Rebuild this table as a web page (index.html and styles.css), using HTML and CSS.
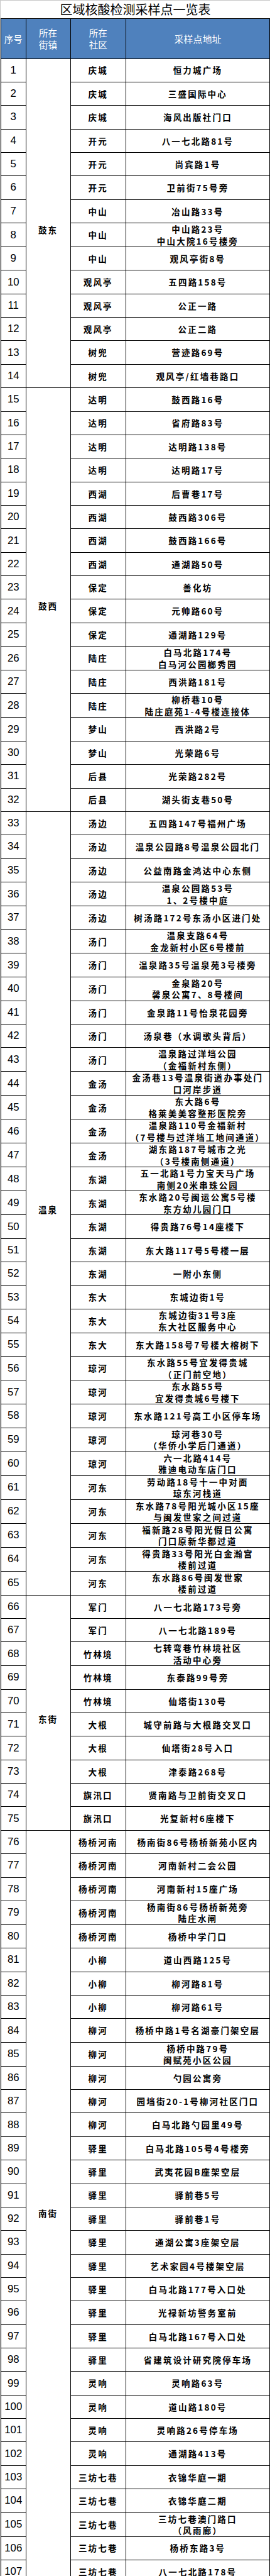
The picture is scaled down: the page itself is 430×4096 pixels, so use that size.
FILE: index.html
```html
<!DOCTYPE html>
<html lang="zh-CN">
<head>
<meta charset="utf-8">
<title>区域核酸检测采样点一览表</title>
<link rel="stylesheet" href="styles.css">
</head>
<body>
<div class="sheet">
  <div class="title">区域核酸检测采样点一览表</div>
  <table class="grid">
    <colgroup>
      <col class="c-seq"><col class="c-town"><col class="c-comm"><col class="c-addr">
    </colgroup>
    <thead>
      <tr>
        <th>序号</th>
        <th>所在<br>街镇</th>
        <th>所在<br>社区</th>
        <th class="h-addr">采样点地址</th>
      </tr>
    </thead>
    <tbody>
      <tr><td class="seq">1</td><td class="town" rowspan="14">鼓东</td><td class="txt">庆城</td><td class="txt">恒力城广场</td></tr>
      <tr><td class="seq">2</td><td class="txt">庆城</td><td class="txt">三盛国际中心</td></tr>
      <tr><td class="seq">3</td><td class="txt">庆城</td><td class="txt">海风出版社门口</td></tr>
      <tr><td class="seq">4</td><td class="txt">开元</td><td class="txt">八一七北路81号</td></tr>
      <tr><td class="seq">5</td><td class="txt">开元</td><td class="txt">尚宾路1号</td></tr>
      <tr><td class="seq">6</td><td class="txt">开元</td><td class="txt">卫前街75号旁</td></tr>
      <tr><td class="seq">7</td><td class="txt">中山</td><td class="txt">冶山路33号</td></tr>
      <tr><td class="seq">8</td><td class="txt">中山</td><td class="txt">中山路23号<br>中山大院16号楼旁</td></tr>
      <tr><td class="seq">9</td><td class="txt">中山</td><td class="txt">观风亭街8号</td></tr>
      <tr><td class="seq">10</td><td class="txt">观风亭</td><td class="txt">五四路158号</td></tr>
      <tr><td class="seq">11</td><td class="txt">观风亭</td><td class="txt">公正一路</td></tr>
      <tr><td class="seq">12</td><td class="txt">观风亭</td><td class="txt">公正二路</td></tr>
      <tr><td class="seq">13</td><td class="txt">树兜</td><td class="txt">营迹路69号</td></tr>
      <tr><td class="seq">14</td><td class="txt">树兜</td><td class="txt">观风亭/红墙巷路口</td></tr>

      <tr><td class="seq">15</td><td class="town" rowspan="18">鼓西</td><td class="txt">达明</td><td class="txt">鼓西路16号</td></tr>
      <tr><td class="seq">16</td><td class="txt">达明</td><td class="txt">省府路83号</td></tr>
      <tr><td class="seq">17</td><td class="txt">达明</td><td class="txt">达明路138号</td></tr>
      <tr><td class="seq">18</td><td class="txt">达明</td><td class="txt">达明路17号</td></tr>
      <tr><td class="seq">19</td><td class="txt">西湖</td><td class="txt">后曹巷17号</td></tr>
      <tr><td class="seq">20</td><td class="txt">西湖</td><td class="txt">鼓西路306号</td></tr>
      <tr><td class="seq">21</td><td class="txt">西湖</td><td class="txt">鼓西路166号</td></tr>
      <tr><td class="seq">22</td><td class="txt">西湖</td><td class="txt">通湖路50号</td></tr>
      <tr><td class="seq">23</td><td class="txt">保定</td><td class="txt">善化坊</td></tr>
      <tr><td class="seq">24</td><td class="txt">保定</td><td class="txt">元帅路60号</td></tr>
      <tr><td class="seq">25</td><td class="txt">保定</td><td class="txt">通湖路129号</td></tr>
      <tr><td class="seq">26</td><td class="txt">陆庄</td><td class="txt">白马北路174号<br>白马河公园榔秀园</td></tr>
      <tr><td class="seq">27</td><td class="txt">陆庄</td><td class="txt">西洪路181号</td></tr>
      <tr><td class="seq">28</td><td class="txt">陆庄</td><td class="txt">柳桥巷10号<br>陆庄庭苑1-4号楼连接体</td></tr>
      <tr><td class="seq">29</td><td class="txt">梦山</td><td class="txt">西洪路2号</td></tr>
      <tr><td class="seq">30</td><td class="txt">梦山</td><td class="txt">光荣路6号</td></tr>
      <tr><td class="seq">31</td><td class="txt">后县</td><td class="txt">光荣路282号</td></tr>
      <tr><td class="seq">32</td><td class="txt">后县</td><td class="txt">湖头街支巷50号</td></tr>

      <tr><td class="seq">33</td><td class="town" rowspan="33">温泉</td><td class="txt">汤边</td><td class="txt">五四路147号福州广场</td></tr>
      <tr><td class="seq">34</td><td class="txt">汤边</td><td class="txt">温泉公园路8号温泉公园北门</td></tr>
      <tr><td class="seq">35</td><td class="txt">汤边</td><td class="txt">公益南路金鸿达中心东侧</td></tr>
      <tr><td class="seq">36</td><td class="txt">汤边</td><td class="txt">温泉公园路53号<br>1、2号楼中庭</td></tr>
      <tr><td class="seq">37</td><td class="txt">汤边</td><td class="txt">树汤路172号东汤小区进门处</td></tr>
      <tr><td class="seq">38</td><td class="txt">汤门</td><td class="txt">温泉支路64号<br>金龙新村小区6号楼前</td></tr>
      <tr><td class="seq">39</td><td class="txt">汤门</td><td class="txt">温泉路35号温泉苑3号楼旁</td></tr>
      <tr><td class="seq">40</td><td class="txt">汤门</td><td class="txt">金泉路20号<br>馨泉公寓7、8号楼间</td></tr>
      <tr><td class="seq">41</td><td class="txt">汤门</td><td class="txt">金泉路11号怡泉花园旁</td></tr>
      <tr><td class="seq">42</td><td class="txt">汤门</td><td class="txt">汤泉巷（水调歌头背后）</td></tr>
      <tr><td class="seq">43</td><td class="txt">汤门</td><td class="txt">温泉路过洋垱公园<br>（金福新村东侧）</td></tr>
      <tr><td class="seq">44</td><td class="txt">金汤</td><td class="txt">金汤巷13号温泉街道办事处门<br>口河岸步道</td></tr>
      <tr><td class="seq">45</td><td class="txt">金汤</td><td class="txt">东大路6号<br>格莱美美容整形医院旁</td></tr>
      <tr><td class="seq">46</td><td class="txt">金汤</td><td class="txt">温泉路110号金福新村<br>（7号楼与过洋垱工地间通道）</td></tr>
      <tr><td class="seq">47</td><td class="txt">金汤</td><td class="txt">湖东路187号城市之光<br>（3号楼南侧通道）</td></tr>
      <tr><td class="seq">48</td><td class="txt">东湖</td><td class="txt">五一北路1号力宝天马广场<br>南侧20米串珠公园</td></tr>
      <tr><td class="seq">49</td><td class="txt">东湖</td><td class="txt">东水路20号闽运公寓5号楼<br>东方幼儿园门口</td></tr>
      <tr><td class="seq">50</td><td class="txt">东湖</td><td class="txt">得贵路76号14座楼下</td></tr>
      <tr><td class="seq">51</td><td class="txt">东湖</td><td class="txt">东大路117号5号楼一层</td></tr>
      <tr><td class="seq">52</td><td class="txt">东湖</td><td class="txt">一附小东侧</td></tr>
      <tr><td class="seq">53</td><td class="txt">东大</td><td class="txt">东城边街1号</td></tr>
      <tr><td class="seq">54</td><td class="txt">东大</td><td class="txt">东城边街31号3座<br>东大社区服务中心</td></tr>
      <tr><td class="seq">55</td><td class="txt">东大</td><td class="txt">东大路158号7号楼大榕树下</td></tr>
      <tr><td class="seq">56</td><td class="txt">琼河</td><td class="txt">东水路55号宜发得贵城<br>（正门前空地）</td></tr>
      <tr><td class="seq">57</td><td class="txt">琼河</td><td class="txt">东水路55号<br>宜发得贵城6号楼下</td></tr>
      <tr><td class="seq">58</td><td class="txt">琼河</td><td class="txt">东水路121号高工小区停车场</td></tr>
      <tr><td class="seq">59</td><td class="txt">琼河</td><td class="txt">琼河巷30号<br>（华侨小学后门通道）</td></tr>
      <tr><td class="seq">60</td><td class="txt">琼河</td><td class="txt">六一北路414号<br>雅迪电动车店门口</td></tr>
      <tr><td class="seq">61</td><td class="txt">河东</td><td class="txt">劳动路18号十一中对面<br>琼东河栈道</td></tr>
      <tr><td class="seq">62</td><td class="txt">河东</td><td class="txt">东水路78号阳光城小区15座<br>与闽发世家之间过道</td></tr>
      <tr><td class="seq">63</td><td class="txt">河东</td><td class="txt">福新路28号阳光假日公寓<br>门口原新华都过道</td></tr>
      <tr><td class="seq">64</td><td class="txt">河东</td><td class="txt">得贵路33号阳光白金瀚宫<br>楼前过道</td></tr>
      <tr><td class="seq">65</td><td class="txt">河东</td><td class="txt">东水路86号闽发世家<br>楼前过道</td></tr>

      <tr><td class="seq">66</td><td class="town" rowspan="10">东街</td><td class="txt">军门</td><td class="txt">八一七北路173号旁</td></tr>
      <tr><td class="seq">67</td><td class="txt">军门</td><td class="txt">八一七北路189号</td></tr>
      <tr><td class="seq">68</td><td class="txt">竹林境</td><td class="txt">七转弯巷竹林境社区<br>活动中心旁</td></tr>
      <tr><td class="seq">69</td><td class="txt">竹林境</td><td class="txt">东泰路99号旁</td></tr>
      <tr><td class="seq">70</td><td class="txt">竹林境</td><td class="txt">仙塔街130号</td></tr>
      <tr><td class="seq">71</td><td class="txt">大根</td><td class="txt">城守前路与大根路交叉口</td></tr>
      <tr><td class="seq">72</td><td class="txt">大根</td><td class="txt">仙塔街28号入口</td></tr>
      <tr><td class="seq">73</td><td class="txt">大根</td><td class="txt">津泰路268号</td></tr>
      <tr><td class="seq">74</td><td class="txt">旗汛口</td><td class="txt">贤南路与卫前街交叉口</td></tr>
      <tr><td class="seq">75</td><td class="txt">旗汛口</td><td class="txt">光复新村6座楼下</td></tr>

      <tr><td class="seq">76</td><td class="town" rowspan="32">南街</td><td class="txt">杨桥河南</td><td class="txt">杨南街86号杨桥新苑小区内</td></tr>
      <tr><td class="seq">77</td><td class="txt">杨桥河南</td><td class="txt">河南新村二会公园</td></tr>
      <tr><td class="seq">78</td><td class="txt">杨桥河南</td><td class="txt">河南新村15座广场</td></tr>
      <tr><td class="seq">79</td><td class="txt">杨桥河南</td><td class="txt">杨南街86号杨桥新苑旁<br>陆庄水闸</td></tr>
      <tr><td class="seq">80</td><td class="txt">杨桥河南</td><td class="txt">杨桥中学门口</td></tr>
      <tr><td class="seq">81</td><td class="txt">小柳</td><td class="txt">道山西路125号</td></tr>
      <tr><td class="seq">82</td><td class="txt">小柳</td><td class="txt">柳河路81号</td></tr>
      <tr><td class="seq">83</td><td class="txt">小柳</td><td class="txt">柳河路61号</td></tr>
      <tr><td class="seq">84</td><td class="txt">柳河</td><td class="txt">杨桥中路1号名湖豪门架空层</td></tr>
      <tr><td class="seq">85</td><td class="txt">柳河</td><td class="txt">杨桥中路79号<br>闽赋苑小区公园</td></tr>
      <tr><td class="seq">86</td><td class="txt">柳河</td><td class="txt">勺园公寓旁</td></tr>
      <tr><td class="seq">87</td><td class="txt">柳河</td><td class="txt">园垱街20-1号柳河社区门口</td></tr>
      <tr><td class="seq">88</td><td class="txt">柳河</td><td class="txt">白马北路勺园里49号</td></tr>
      <tr><td class="seq">89</td><td class="txt">驿里</td><td class="txt">白马北路105号4号楼旁</td></tr>
      <tr><td class="seq">90</td><td class="txt">驿里</td><td class="txt">武夷花园B座架空层</td></tr>
      <tr><td class="seq">91</td><td class="txt">驿里</td><td class="txt">驿前巷5号</td></tr>
      <tr><td class="seq">92</td><td class="txt">驿里</td><td class="txt">驿前巷1号</td></tr>
      <tr><td class="seq">93</td><td class="txt">驿里</td><td class="txt">通湖公寓3座架空层</td></tr>
      <tr><td class="seq">94</td><td class="txt">驿里</td><td class="txt">艺术家园4号楼架空层</td></tr>
      <tr><td class="seq">95</td><td class="txt">驿里</td><td class="txt">白马北路177号入口处</td></tr>
      <tr><td class="seq">96</td><td class="txt">驿里</td><td class="txt">光禄新坊警务室前</td></tr>
      <tr><td class="seq">97</td><td class="txt">驿里</td><td class="txt">白马北路167号入口处</td></tr>
      <tr><td class="seq">98</td><td class="txt">驿里</td><td class="txt">省建筑设计研究院停车场</td></tr>
      <tr><td class="seq">99</td><td class="txt">灵响</td><td class="txt">灵响路63号</td></tr>
      <tr><td class="seq">100</td><td class="txt">灵响</td><td class="txt">道山路180号</td></tr>
      <tr><td class="seq">101</td><td class="txt">灵响</td><td class="txt">灵响路26号停车场</td></tr>
      <tr><td class="seq">102</td><td class="txt">灵响</td><td class="txt">通湖路413号</td></tr>
      <tr><td class="seq">103</td><td class="txt">三坊七巷</td><td class="txt">衣锦华庭一期</td></tr>
      <tr><td class="seq">104</td><td class="txt">三坊七巷</td><td class="txt">衣锦华庭二期</td></tr>
      <tr><td class="seq">105</td><td class="txt">三坊七巷</td><td class="txt">三坊七巷澳门路口<br>（风雨廊）</td></tr>
      <tr><td class="seq">106</td><td class="txt">三坊七巷</td><td class="txt">杨桥东路3号</td></tr>
      <tr><td class="seq">107</td><td class="txt">三坊七巷</td><td class="txt">八一七北路178号</td></tr>
    </tbody>
  </table>
</div>
</body>
</html>
```

FILE: styles.css
```css
html, body {
  margin: 0;
  padding: 0;
  background: #ffffff;
}

.sheet {
  width: 429px;
  border-left: 1px solid #c8c8c8;
  border-top: 1px solid #c8c8c8;
  font-family: "Noto Sans CJK SC", "Noto Sans", sans-serif;
  color: #000000;
}

.title {
  height: 28px;
  line-height: 28px;
  text-align: center;
  font-size: 20px;
  font-weight: 400;
}

.grid {
  border-collapse: collapse;
  table-layout: fixed;
  width: 428px;
}

.c-seq { width: 39.5px; }
.c-town { width: 71.2px; }
.c-comm { width: 88.2px; }
.c-addr { width: 229.1px; }

.grid th,
.grid td {
  border: 1px solid #000000;
  padding: 0;
  text-align: center;
  vertical-align: middle;
  overflow: hidden;
}

.grid thead tr {
  height: 63.5px;
}

.grid th {
  background: #4f81bd;
  color: #ffffff;
  font-weight: 400;
  font-size: 14.5px;
  line-height: 19px;
}

.grid th.h-addr {
  font-size: 15px;
}

.grid tbody tr {
  height: 37.37px;
}

.seq {
  font-family: "Liberation Sans Narrow", "Liberation Sans", Arial, sans-serif;
  font-size: 16.8px;
  line-height: 18px;
}

.txt,
.town {
  font-size: 13.5px;
  font-weight: 700;
  letter-spacing: 2.2px;
  line-height: 18.5px;
  white-space: nowrap;
  padding-left: 2.2px;
}

.grid td.town {
  padding-top: 20px;
}
```
